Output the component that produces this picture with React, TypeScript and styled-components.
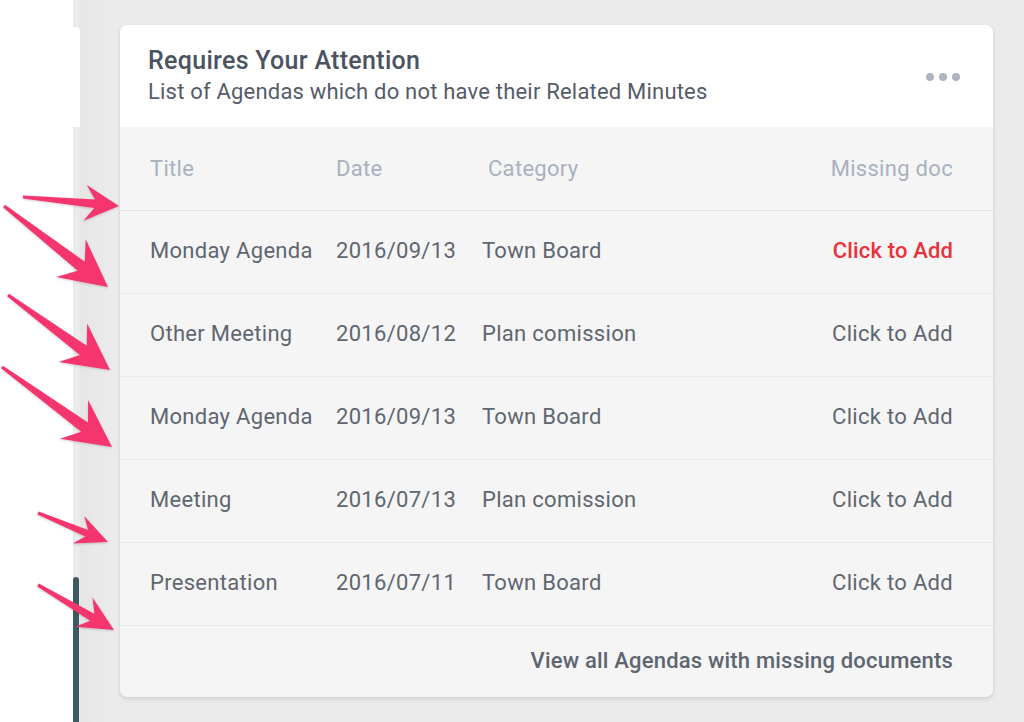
import React from "react";
import styled, { createGlobalStyle } from "styled-components";

const Global = createGlobalStyle`
  html, body { margin: 0; padding: 0; }
  body {
    width: 1024px;
    height: 722px;
    overflow: hidden;
    background: #ebebeb;
    font-family: Roboto, "Liberation Sans", Arial, sans-serif;
  }
`;

const Page = styled.div`
  position: relative;
  display: flex;
  width: 1024px;
  height: 722px;
  background: #ebebeb;
`;

const SidePanel = styled.div`
  width: 73px;
  flex: none;
  background: #ffffff;
`;

const Rail = styled.div`
  width: 7px;
  flex: none;
  display: flex;
  flex-direction: column;
  padding-top: 27px;
  box-sizing: border-box;
`;

const RailTab = styled.div`
  height: 100px;
  background: #ffffff;
  border-top-right-radius: 4px;
`;

const RailSpacer = styled.div`
  flex: 1;
`;

const RailBar = styled.div`
  height: 145px;
  width: 6px;
  background: #3d5a62;
  border-top-left-radius: 3px;
  border-top-right-radius: 3px;
`;

const Main = styled.div`
  flex: 1;
  padding: 25px 31px 0 40px;
  background: linear-gradient(90deg, #e6e6e6 0px, #ebebeb 30px);
`;

const Card = styled.section`
  width: 873px;
  height: 672px;
  border-radius: 7px;
  overflow: hidden;
  background: #f5f5f5;
  box-shadow: 0 2px 4px rgba(0, 0, 0, 0.12), 0 0 1px rgba(0, 0, 0, 0.08);
  display: flex;
  flex-direction: column;
`;

const Header = styled.header`
  height: 102px;
  flex: none;
  background: #ffffff;
  display: flex;
  align-items: center;
  justify-content: space-between;
  padding: 0 33px 0 28px;
  box-sizing: border-box;
`;

const HeadText = styled.div`
  display: flex;
  flex-direction: column;
  gap: 1px;
  margin-top: -1px;
`;

const Title = styled.h2`
  margin: 0;
  font-size: 25px;
  line-height: 31px;
  font-weight: 500;
  letter-spacing: 0.3px;
  color: #4b5361;
`;

const Subtitle = styled.p`
  margin: 0;
  font-size: 22px;
  line-height: 29px;
  letter-spacing: 0.2px;
  color: #555c68;
`;

const Dots = styled.div`
  display: flex;
  gap: 5px;
  margin-top: 2px;
`;

const Dot = styled.span`
  width: 8px;
  height: 8px;
  border-radius: 50%;
  background: #aeb5c1;
`;

const Row = styled.div<{ $head?: boolean }>`
  display: grid;
  grid-template-columns: 186px 146px 1fr auto;
  align-items: center;
  height: ${(p) => (p.$head ? 84 : 83)}px;
  flex: none;
  padding: 0 40px ${(p) => (p.$head ? 0 : 4)}px 30px;
  box-sizing: border-box;
  border-bottom: 1px solid ${(p) => (p.$head ? "#e1e3e8" : "#e9e9eb")};
  font-size: 22px;
  letter-spacing: 0.3px;
  color: ${(p) => (p.$head ? "#a9b1bf" : "#5f6670")};
`;

const Cell = styled.span<{ $shift?: number }>`
  white-space: nowrap;
  padding-left: ${(p) => p.$shift ?? 0}px;
`;

const Action = styled.a<{ $alert?: boolean }>`
  color: ${(p) => (p.$alert ? "#e8323c" : "#5f6670")};
  text-decoration: none;
  font-weight: ${(p) => (p.$alert ? 500 : 400)};
  letter-spacing: ${(p) => (p.$alert ? "0.15px" : "0.3px")};
  white-space: nowrap;
`;

const Footer = styled.div`
  flex: 1;
  display: flex;
  align-items: center;
  justify-content: flex-end;
  padding: 0 40px 3px 0;
`;

const FooterLink = styled.a`
  font-size: 22px;
  font-weight: 500;
  letter-spacing: 0.2px;
  color: #5e6571;
  text-decoration: none;
`;

const ArrowLayer = styled.svg`
  position: absolute;
  left: 0;
  top: 0;
  pointer-events: none;
`;

type ArrowSpec = {
  tail: [number, number];
  tip: [number, number];
  head: number;
  wing: number;
};

const arrows: ArrowSpec[] = [
  { tail: [23, 197], tip: [119, 206], head: 34, wing: 18 },
  { tail: [4, 206], tip: [108, 287], head: 47, wing: 24 },
  { tail: [8, 295], tip: [110, 370], head: 46, wing: 24 },
  { tail: [2, 367], tip: [112, 447], head: 47, wing: 24 },
  { tail: [38, 513], tip: [108, 542], head: 32, wing: 15 },
  { tail: [38, 585], tip: [114, 630], head: 35, wing: 17 },
];

function arrowPoints(a: ArrowSpec): string {
  const [tx, ty] = a.tail;
  const [px, py] = a.tip;
  const dx = px - tx;
  const dy = py - ty;
  const len = Math.hypot(dx, dy);
  const ux = dx / len;
  const uy = dy / len;
  const nx = -uy;
  const ny = ux;
  const at = (back: number, side: number) =>
    `${(px - ux * back + nx * side).toFixed(1)},${(py - uy * back + ny * side).toFixed(1)}`;
  const neckBack = a.head * 0.72;
  const neckW = a.wing * 0.24;
  return [
    at(len, 1.6),
    at(neckBack, neckW),
    at(a.head, a.wing),
    at(0, 0),
    at(a.head, -a.wing),
    at(neckBack, -neckW),
    at(len, -1.6),
  ].join(" ");
}

const rows = [
  { title: "Monday Agenda", date: "2016/09/13", category: "Town Board", alert: true },
  { title: "Other Meeting", date: "2016/08/12", category: "Plan comission" },
  { title: "Monday Agenda", date: "2016/09/13", category: "Town Board" },
  { title: "Meeting", date: "2016/07/13", category: "Plan comission" },
  { title: "Presentation", date: "2016/07/11", category: "Town Board" },
];

export default function App() {
  return (
    <>
      <Global />
      <Page>
        <SidePanel />
        <Rail>
          <RailTab />
          <RailSpacer />
          <RailBar />
        </Rail>
        <Main>
          <Card>
            <Header>
              <HeadText>
                <Title>Requires Your Attention</Title>
                <Subtitle>List of Agendas which do not have their Related Minutes</Subtitle>
              </HeadText>
              <Dots>
                <Dot />
                <Dot />
                <Dot />
              </Dots>
            </Header>
            <Row $head>
              <Cell>Title</Cell>
              <Cell>Date</Cell>
              <Cell $shift={6}>Category</Cell>
              <Cell>Missing doc</Cell>
            </Row>
            {rows.map((r, i) => (
              <Row key={i}>
                <Cell>{r.title}</Cell>
                <Cell>{r.date}</Cell>
                <Cell>{r.category}</Cell>
                <Action href="#" $alert={r.alert}>
                  Click to Add
                </Action>
              </Row>
            ))}
            <Footer>
              <FooterLink href="#">View all Agendas with missing documents</FooterLink>
            </Footer>
          </Card>
        </Main>
        <ArrowLayer width="140" height="722" viewBox="0 0 140 722">
          <defs>
            <filter id="arrowShadow" x="-20%" y="-20%" width="140%" height="140%">
              <feDropShadow dx="0" dy="1" stdDeviation="1" floodColor="#000" floodOpacity="0.18" />
            </filter>
          </defs>
          {arrows.map((a, i) => (
            <polygon
              key={i}
              points={arrowPoints(a)}
              fill="#f5346d"
              strokeLinejoin="round"
              filter="url(#arrowShadow)"
            />
          ))}
        </ArrowLayer>
      </Page>
    </>
  );
}
